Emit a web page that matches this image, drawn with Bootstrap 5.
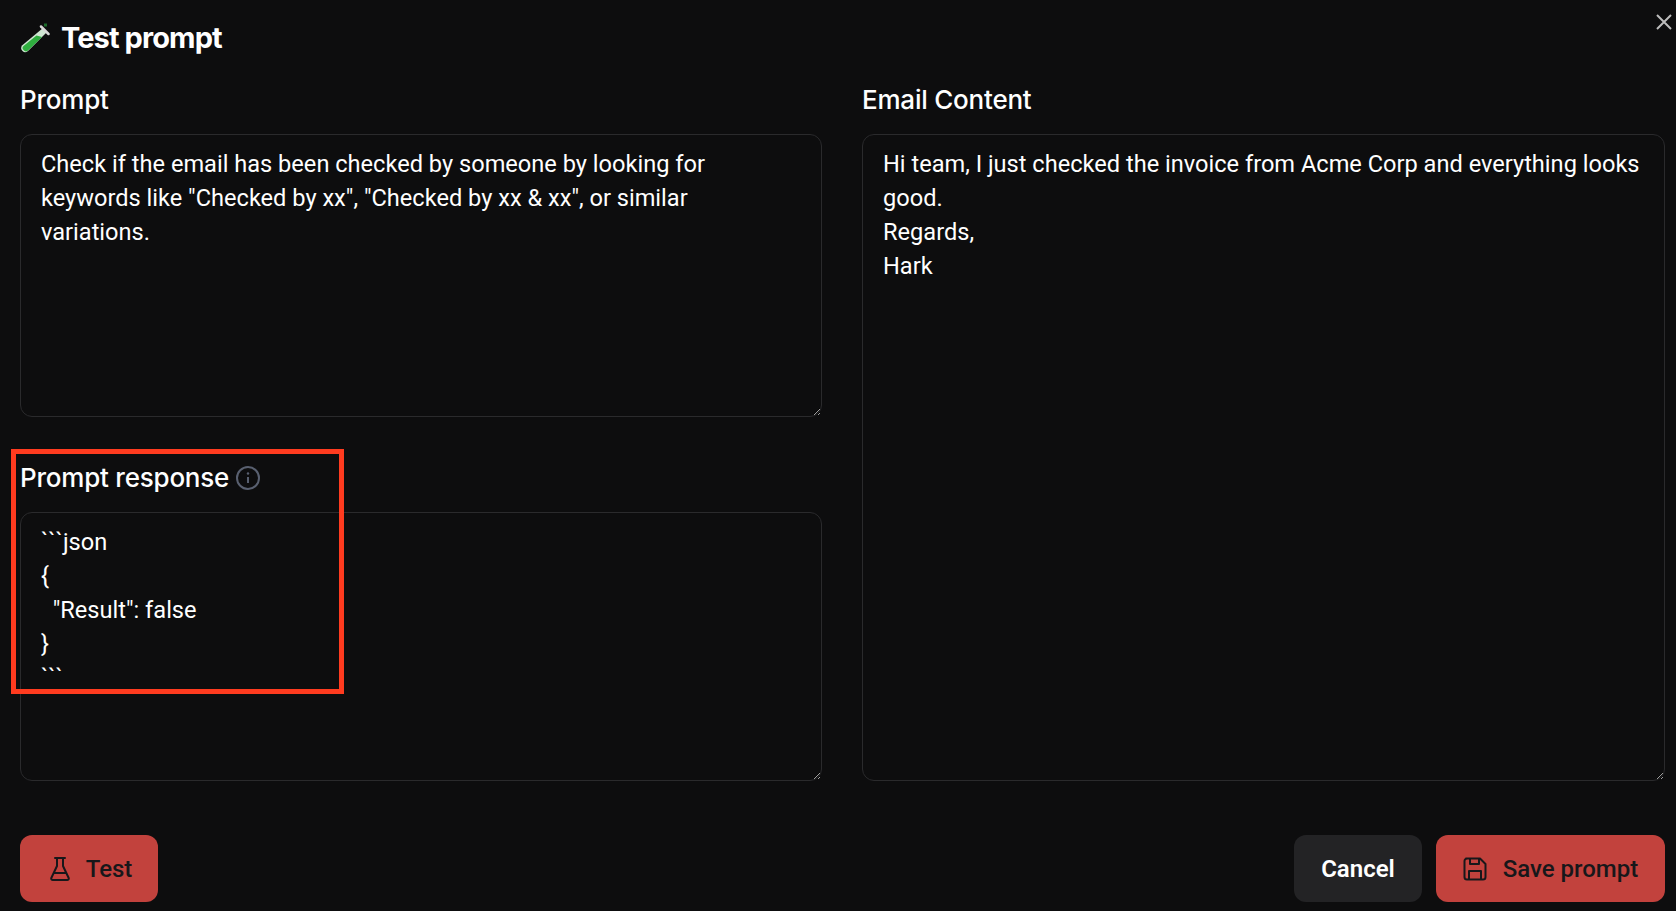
<!DOCTYPE html>
<html lang="en" data-bs-theme="dark">
<head>
<meta charset="utf-8">
<title>Test prompt</title>
<link href="https://cdn.jsdelivr.net/npm/bootstrap@5.3.0/dist/css/bootstrap.min.css" rel="stylesheet">
<style>
html,body{height:911px;overflow:hidden}
body{background:#0d0d0e;color:#fff;font-family:Inter,"Liberation Sans",sans-serif}
.dlg{position:relative;height:911px;padding:0 11px 8px 20px}
.dlg-head{height:83px;gap:11px;padding-bottom:8px}
.dlg-head svg{margin-left:-2px}
.dlg-title{font-size:29px;font-weight:700;letter-spacing:-.9px;margin:0;line-height:1;color:#fff}
.dlg-close{position:absolute;top:13px;right:3px;background:none;border:0;padding:0;line-height:0}
.cols{display:grid;grid-template-columns:802px 803px;column-gap:40px}
.fld-label{font-size:26px;font-weight:500;letter-spacing:-.22px;line-height:34px;color:#fff;margin:0 0 17px;display:flex;align-items:center;gap:6px}
.fld-area.form-control{background:#0d0d0e;border:1px solid #2a2a2c;border-radius:12px;color:#fff;font-family:Roboto,Inter,sans-serif;font-size:23.6px;line-height:34px;padding:12px 20px;display:block;width:100%;box-shadow:none}
.a1{height:283px;margin-bottom:44px}
.a2{height:269px}
.a3{height:647px}
.foot{margin-top:54px}
.act{height:67px;border-radius:12px;border:0;font-size:24px;font-weight:500;display:inline-flex;align-items:center;justify-content:center;gap:16px;font-family:Roboto,Inter,sans-serif}
.act-red,.act-red:hover{background:#c2423d;color:#17171a}
.act-dark,.act-dark:hover{background:#232325;color:#fff;font-weight:600}
.w-test{width:138px;padding-left:16px;padding-right:12px}.w-cancel{width:128px}.w-save{width:229px}
.btn-pair{gap:14px}
.callout{position:absolute;left:11px;top:449px;width:333px;height:245px;border:5px solid #ff3b1f;pointer-events:none}
</style>
</head>
<body>
<div class="dlg">
  <div class="dlg-head d-flex align-items-center">
    <svg width="32" height="32" viewBox="0 0 32 32" aria-hidden="true">
      <path d="M25 6 L29 10 L10 29 Q7 31.500 4.500 29 Q2 26.500 4 23.500Z" fill="#cfe6d2"/>
      <path d="M18.500 13.500 L24 15 L10 28.500 Q7.500 30.500 5.500 28 Q3.500 26 5.500 24Z" fill="#2fae3f"/>
      <path d="M23 4.500 L30.500 12" stroke="#d8d8d8" stroke-width="2.500" stroke-linecap="round"/>
      <rect x="26" y="1.500" width="3" height="3" fill="#1c6b2a"/>
    </svg>
    <h1 class="dlg-title">Test prompt</h1>
  </div>
  <button class="dlg-close" type="button" aria-label="Close">
    <svg width="18" height="18" viewBox="0 0 18 18"><path d="M2 2L16 16M16 2L2 16" stroke="#bdbdbd" stroke-width="2"/></svg>
  </button>
  <div class="cols">
    <div>
      <label class="fld-label" for="p1">Prompt</label>
      <textarea id="p1" class="form-control fld-area a1">Check if the email has been checked by someone by looking for keywords like "Checked by xx", "Checked by xx &amp; xx", or similar variations.</textarea>
      <label class="fld-label" for="p2">Prompt response
        <svg width="26" height="26" viewBox="0 0 26 26" aria-hidden="true"><circle cx="13" cy="13" r="11" fill="none" stroke="#596070" stroke-width="2"/><path d="M13 12v6" stroke="#596070" stroke-width="2"/><circle cx="13" cy="8.500" r="1.200" fill="#596070"/></svg>
      </label>
      <textarea id="p2" class="form-control fld-area a2">```json
{
  "Result": false
}
```</textarea>
    </div>
    <div>
      <label class="fld-label" for="p3">Email Content</label>
      <textarea id="p3" class="form-control fld-area a3">Hi team, I just checked the invoice from Acme Corp and everything looks good.
Regards,
Hark</textarea>
    </div>
  </div>
  <div class="foot d-flex justify-content-between">
    <button class="btn act act-red w-test" type="button">
      <svg width="20" height="26" viewBox="0 0 20 26" fill="none" stroke="#17171a" stroke-width="2" stroke-linejoin="round" stroke-linecap="round" aria-hidden="true"><path d="M5 2h10M7 2v8L1.300 22a1.500 1.500 0 0 0 1.500 2h14.400a1.500 1.500 0 0 0 1.500-2L13 10V2M4.500 17h11"/></svg>
      Test
    </button>
    <div class="d-flex btn-pair">
      <button class="btn act act-dark w-cancel" type="button">Cancel</button>
      <button class="btn act act-red w-save" type="button">
        <svg width="24" height="24" viewBox="0 0 24 24" fill="none" stroke="#17171a" stroke-width="2" stroke-linejoin="round" aria-hidden="true"><path d="M3 1.500h14l5.500 5.500v13a2.500 2.500 0 0 1-2.500 2.500H4a2.500 2.500 0 0 1-2.500-2.500V4A2.500 2.500 0 0 1 4 1.500Z"/><path d="M6 22v-8h12v8M7 1.500V7h9V1.500"/></svg>
        Save prompt
      </button>
    </div>
  </div>
  <div class="callout"></div>
</div>
<script src="https://cdn.jsdelivr.net/npm/bootstrap@5.3.0/dist/js/bootstrap.bundle.min.js"></script>
</body>
</html>
